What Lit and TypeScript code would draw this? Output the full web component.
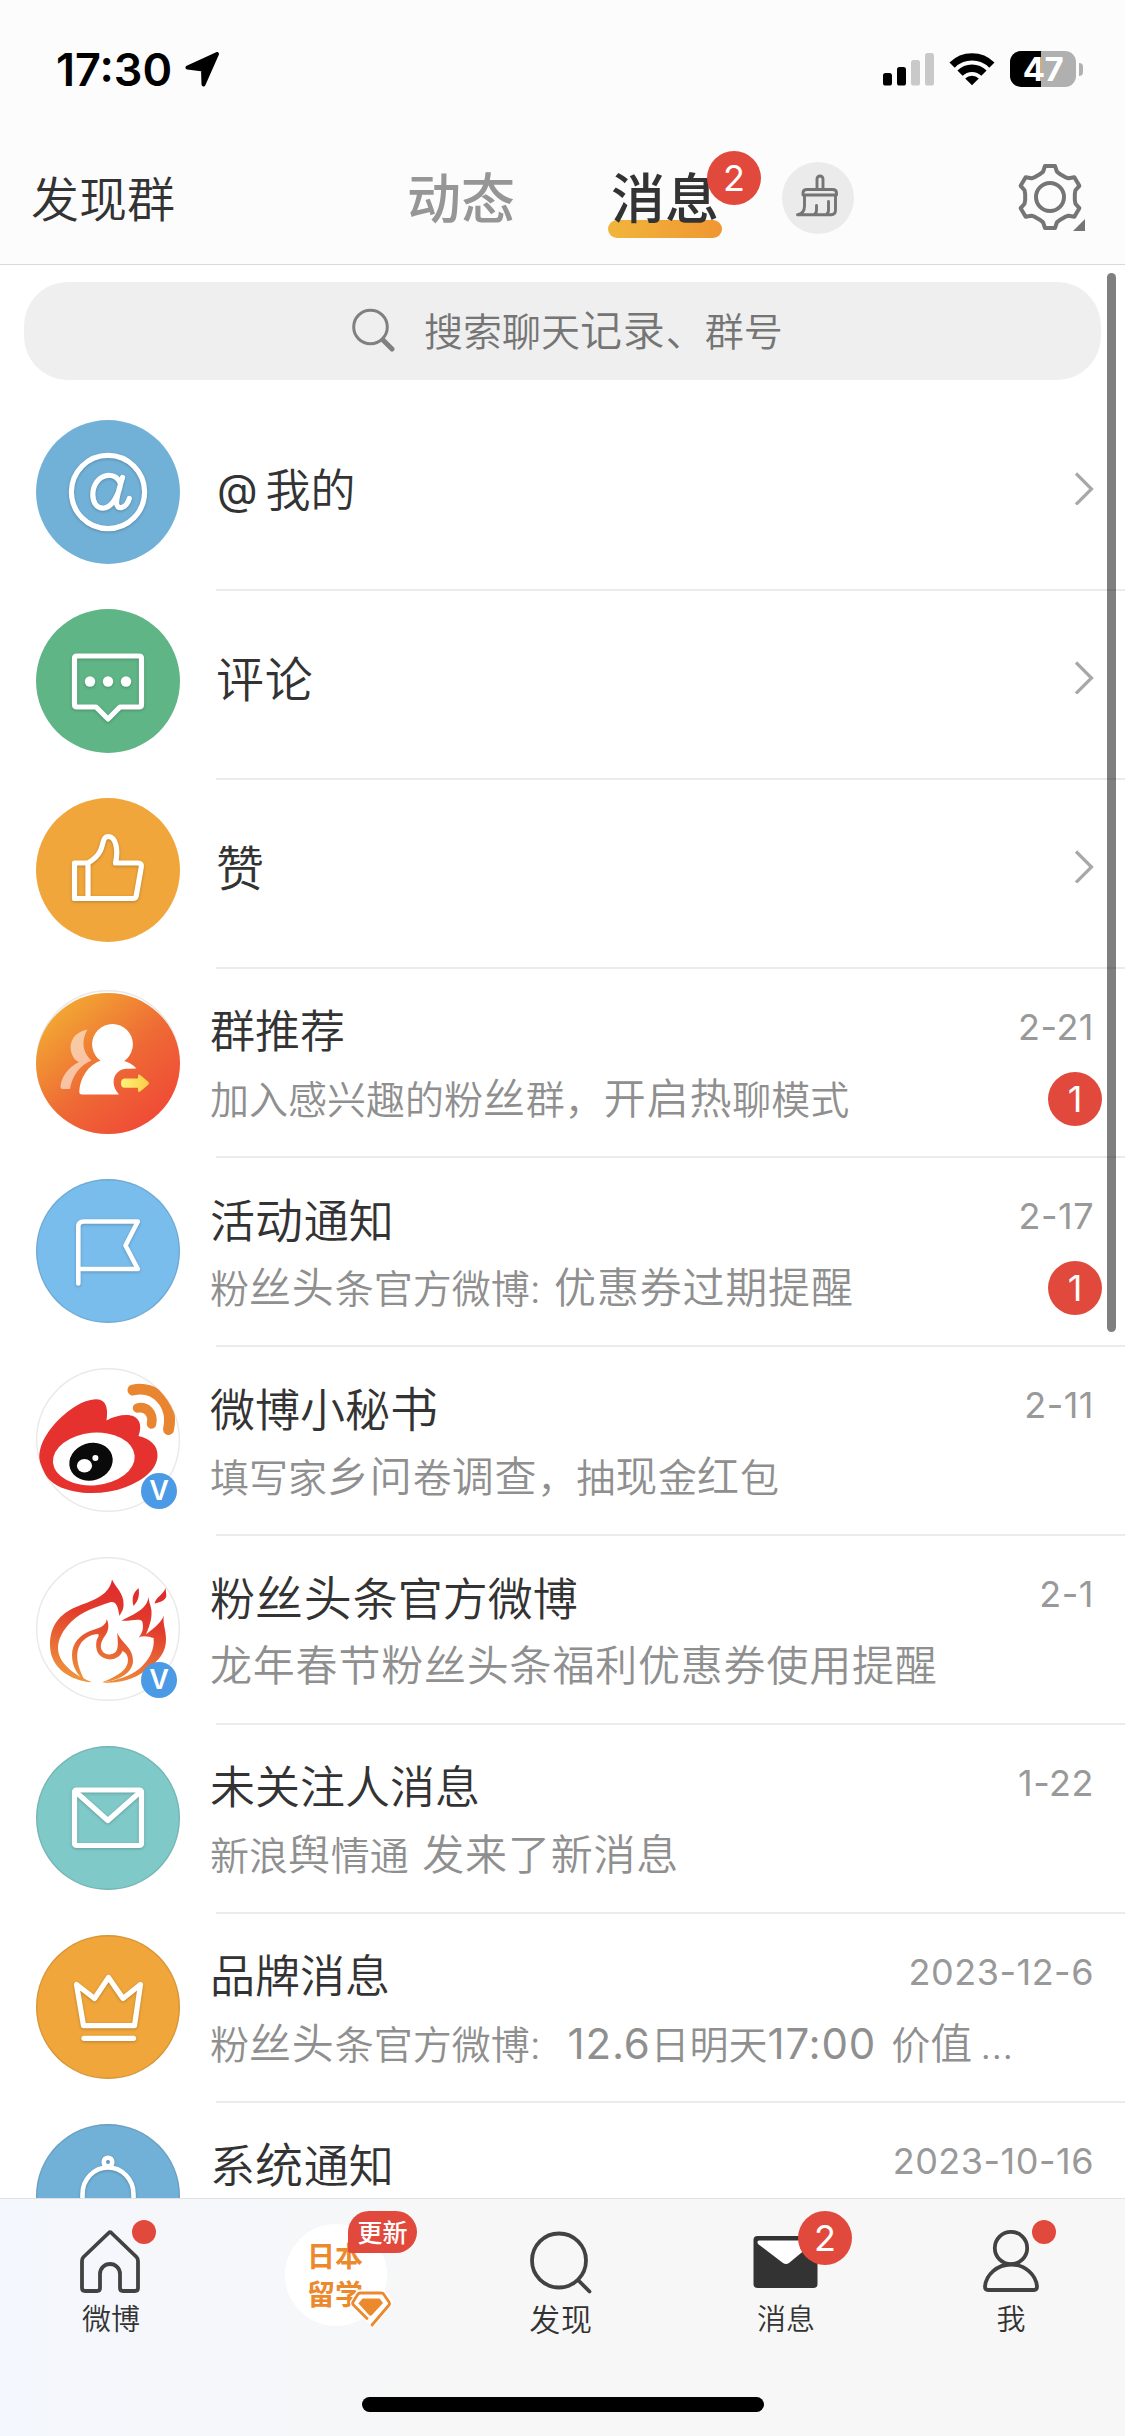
import { LitElement, html, svg, css, nothing, TemplateResult } from "lit";
import { customElement, property } from "lit/decorators.js";

const gearPath = (() => {
  const tooth = [[-9.8, -23], [-6.9, -25.4], [-5, -31], [5, -31], [6.9, -25.4], [9.8, -23]];
  const pts: string[] = [];
  for (let i = 0; i < 6; i++) {
    const a = (i * Math.PI) / 3;
    for (const [x, y] of tooth) {
      pts.push(`${(x * Math.cos(a) - y * Math.sin(a)).toFixed(2)} ${(x * Math.sin(a) + y * Math.cos(a)).toFixed(2)}`);
    }
  }
  return "M" + pts.join("L") + "Z";
})();

/** Text in square brackets is set one step larger than the rest; numbers in them are also a step heavier. */
const sized = (s: string) =>
  s.split(/[\[\]]/).map((part, i) =>
    part ? (i % 2 ? html`<span class="lg ${/^[\d.:]+ ?$/.test(part) ? "num" : ""}">${part}</span>` : html`<span>${part}</span>`) : nothing);

const icons: Record<string, TemplateResult> = {
  at: svg`<circle cx="72" cy="72" r="36.6"/>
    <path d="M86.5 57.500C84 66 81 75 80.500 82.500C80.500 91 90.500 88.500 93.300 78.500M84.500 64C82 57 77 55 72 55.300C63 56 56.800 65 56.800 74.500C56.800 83 61 88.200 67 88.200C74 88 80.500 80 84 67"/>`,
  comment: svg`<path d="M41 47H103Q105.500 47 105.500 49.500V95.500Q105.500 98 103 98H84L72 110L60 98H41Q38.500 98 38.500 95.500V49.500Q38.500 47 41 47Z"/>
    <g class="solid"><circle cx="54" cy="72.500" r="5.200"/><circle cx="72" cy="72.500" r="5.200"/><circle cx="90" cy="72.500" r="5.200"/></g>`,
  like: svg`<path d="M52 65H38.500V100.500H97Q99.500 100.500 100.200 98L105.300 69Q105.800 65 102 65H79.500C82.500 52 80 39 72.500 38.500C66.500 38.500 67.500 46 64.500 52.500C62 58 57 62 52 65V100.500"/>`,
  flag: svg`<path d="M42.300 104.500V48Q42.300 42.500 48 42.500H101.800L89.500 66.500L101.800 90H42.300"/>`,
  mail: svg`<rect x="38.500" y="44" width="67" height="55.500" rx="2"/><path d="M40.500 46.500L71.800 74.500L103.500 46.500"/>`,
  crown: svg`<path d="M40.500 49.500L47.500 90.700H98.500L104.500 49.500L87 63.500L72.500 42.500L58.500 63.500Z"/><path d="M48 103.300H97.500"/>`,
  bell: svg`<circle cx="72" cy="38" r="4.300"/><path d="M38 106H106M46.500 106V70A25.500 26.500 0 0 1 97.500 70V106"/>`,
};

const groupArt = svg`
  <defs><linearGradient id="gg" x1=".15" y1=".1" x2=".85" y2=".9">
    <stop offset="0" stop-color="#f2a833"/><stop offset=".55" stop-color="#ee6935"/><stop offset="1" stop-color="#f04a36"/></linearGradient>
    <linearGradient id="ga" x1="0" x2="1"><stop offset="0" stop-color="#fff27a"/><stop offset="1" stop-color="#f8ce45"/></linearGradient></defs>
  <circle cx="72" cy="72" r="71.300" fill="#fff" stroke="#e8e8e8" stroke-width="1.400"/>
  <ellipse cx="72" cy="73.500" rx="72" ry="70.500" fill="url(#gg)"/>
  <path d="M51.500 39.500C38 42 33 52 35 61C36 67 40 71 43 72C32 77 25 88 24.500 96.500Q24.500 99 27 99H34C36 86 44 75 55.500 70.500C48 64 44 52 51.500 39.500Z" fill="#fff" opacity=".55"/>
  <circle cx="76.500" cy="54.300" r="20.400" fill="#fff"/>
  <path d="M66 70C51 75 44 89 43.300 101Q43 104.500 46 104.500H83C76 97 76 87 82 82Q86 78.500 91 78.700L100.500 78.500C97 74.500 92 72 86.500 70.500Z" fill="#fff"/>
  <path d="M88.500 88.600H102V86Q102 83.500 104.500 85.200L112.500 92Q113.500 93.300 112.500 94.500L104.500 101.300Q102 103 102 100.500V97.800H88.500Q85 97.500 85 93.200Q85 89 88.500 88.600Z" fill="url(#ga)"/>`;

const weiboArt = svg`
  <defs><clipPath id="cc"><circle cx="72" cy="72" r="71.500"/></clipPath></defs>
  <circle cx="72" cy="72" r="71.300" fill="#fff" stroke="#e9e9e9" stroke-width="1.400"/>
  <g clip-path="url(#cc)">
  <path d="M3.300 90C3 72 18 54 34 42C46 33 58 30 64 31.800C71 34 72 43 70.500 52.500C80 47 92 45.500 98 48.500C105 52 105.500 60 102.500 68C115 71 122 78 121.500 88C121 102 106 113 90 119C68 127.500 40 127 22 118C9 111 4 100 3.300 90Z" fill="#e6322e"/>
  <ellipse cx="57.800" cy="91" rx="41" ry="26.300" transform="rotate(-5 57.800 91)" fill="#fff"/>
  <ellipse cx="55" cy="93.700" rx="22" ry="18.600" transform="rotate(-18 55 93.700)" fill="#0a0a0a"/>
  <ellipse cx="48.500" cy="97.800" rx="7.600" ry="6.800" fill="#fff"/><circle cx="59.400" cy="90" r="3" fill="#fff"/>
  <path d="M97 22C119 17 138 36 132.500 61.500" fill="none" stroke="#e98530" stroke-width="11" stroke-linecap="round"/>
  <path d="M101.500 40C110 38 118 45 115.500 56" fill="none" stroke="#e98530" stroke-width="9.500" stroke-linecap="round"/></g>`;

const fireArt = svg`
  <defs><linearGradient id="ff" gradientUnits="userSpaceOnUse" x1="85" y1="25" x2="60" y2="126">
    <stop offset="0" stop-color="#df2a2c"/><stop offset=".35" stop-color="#e23b2c"/><stop offset="1" stop-color="#ee923c"/></linearGradient></defs>
  <circle cx="72" cy="72" r="71.300" fill="#fff" stroke="#e9e9e9" stroke-width="1.400"/>
  <g fill="url(#ff)">
  <path d="M76 22.500C80 31 88 36 87.600 48C87.500 53 85 56 83.500 59C82 51 81 44.500 75 45C60 50 46 54 35 65C27 73 22 82 22 91C22 106 38 118 56 125.300C36 124 14 112 14 88C14 68 24 57 40 50C54 44 73 40 76 22.500Z"/>
  <path d="M70.800 62C74 70 72 75 67.500 81C64 87 64 92 67.500 95.500C71 98.500 77 98 80 94.500C83 90 81.500 84 81.300 75.500C85 86 97 90 97 104C97 116 82 124 66 125.300C82 119 92 113 92 103C92 98 89 95 86.500 94C84 101 76 103.500 71 102C62 100 59 93 60.500 84C61 81 64 79 62 77C56 77 48 81 44.500 87C38 97 42 112 50 125.300C42 119 36 110 36 98C36 86 44 78 54 74C62 71 70 70 70.800 62Z"/>
  <path d="M102.600 31C97 36 95.500 41 97.500 49C103 43 103.500 38 102.600 31ZM129.500 31C127 38 120 40 118.500 46.500C125 45.500 131 42 130.300 38Z"/>
  <path d="M112.500 37C113 50 103 55 85.400 63.700C94 64.500 103 61 106 64C108 69 107 76 102.600 80.500C108 78 113 80 117.600 81C119 92 113 104 103 112C94 119 82 123 66 126C86 126 98 122 109 114C124 103 130 95 130 82C130 73 126.500 67 127.800 58.500C125 66 119 70 110 77.500C113 70 116 63 115.500 54C115 48 112 44 112.500 37Z"/></g>`;

@customElement("row-avatar")
class RowAvatar extends LitElement {
  @property() icon = "at";
  @property() tint = "#72b1d7";
  @property({ type: Boolean }) rim = false;
  @property({ type: Boolean }) verified = false;
  static styles = css`
    :host { display: block; position: relative; width: 144px; height: 144px; flex: none; }
    svg { display: block; overflow: visible; }
    .line { fill: none; stroke: #fff; stroke-width: 5.2; stroke-linejoin: round; stroke-linecap: round; filter: drop-shadow(0 1px 1.500px rgba(0,0,0,.22)); }
    .thin { stroke-width: 4.6; }
    .solid { fill: #fff; stroke: none; }
    .v { position: absolute; left: 105px; top: 105px; width: 36px; height: 36px; border-radius: 50%; background: #4b9ae5;
      color: #fff; font: 600 27px/36px Inter, sans-serif; text-align: center; }
  `;
  render() {
    const art: Record<string, TemplateResult> = { group: groupArt, weibo: weiboArt, fire: fireArt };
    return html`<svg width="144" height="144" viewBox="0 0 144 144">${
      art[this.icon] ??
      svg`<circle cx="72" cy="72" r="72" fill=${this.tint}/>
        ${this.rim ? svg`<circle cx="72" cy="72" r="71.300" fill="none" stroke="#000" stroke-opacity=".1" stroke-width="1.400"/>` : nothing}
        <g class="line ${this.icon === "flag" || this.icon === "bell" ? "thin" : ""}">${icons[this.icon]}</g>`
    }</svg>${this.verified ? html`<span class="v">V</span>` : nothing}`;
  }
}

interface Entry { icon: string; tint?: string; title: string; sub?: string; date?: string; count?: number; verified?: boolean }

const shortcuts: Entry[] = [
  { icon: "at", tint: "#72b1d7", title: "我的" },
  { icon: "comment", tint: "#5fb585", title: "[评论]" },
  { icon: "like", tint: "#f0a63b", title: "[赞]" },
];
const chats: Entry[] = [
  { icon: "group", title: "群推荐", sub: "加入感兴趣的粉[丝]群，[开启热]聊模式", date: "2-21", count: 1 },
  { icon: "flag", tint: "#79bdec", title: "活[动]通知", sub: "粉[丝头]条官方微博: [优惠券过期提醒]", date: "2-17", count: 1 },
  { icon: "weibo", title: "微博小秘[书]", sub: "填写家[乡问]卷[调查]，抽[现]金[红]包", date: "2-11", verified: true },
  { icon: "fire", title: "粉[丝头]条官方微博", sub: "[龙年春节粉丝头条福利优惠券使用提醒]", date: "2-1", verified: true },
  { icon: "mail", tint: "#80c9c9", title: "未关注人消息", sub: "新浪[舆]情通 [发来了新消息]", date: "1-22" },
  { icon: "crown", tint: "#f0a63b", title: "品牌消息", sub: "粉[丝头]条官方微博:  [12.6]日明天[17:00 ]价[值]\u2009…", date: "2023-12-6" },
  { icon: "bell", tint: "#72b1d7", title: "系[统]通知", sub: "", date: "2023-10-16" },
];

@customElement("app-root")
class AppRoot extends LitElement {
  static styles = css`
    :host { display: block; width: 1125px; height: 2436px; font-family: Inter, "Noto Sans CJK SC", sans-serif; font-weight: 350; color: #333; }
    * { box-sizing: border-box; }
    svg { display: block; flex: none; }
    .screen { position: relative; width: 1125px; height: 2436px; display: flex; flex-direction: column; overflow: hidden; background: #fff; }
    .top { height: 265px; flex: none; background: #fcfcfc; border-bottom: 1px solid #d9d9d9; }
    .status { height: 138px; padding: 0 42px 0 56px; display: flex; align-items: center; justify-content: space-between; }
    .clock { display: flex; align-items: center; gap: 13px; font: 600 45px/1 Inter, sans-serif; color: #000; letter-spacing: 0; }
    .sys { display: flex; align-items: center; gap: 15px; }
    .battery { display: flex; align-items: center; gap: 3px; }
    .cell { width: 66px; height: 36px; border-radius: 11px; background: linear-gradient(90deg, #000 47%, #b0b0b0 47%);
      color: #fff; font: 700 33px/37px Inter, sans-serif; text-align: center; letter-spacing: -.5px; }
    .nub { width: 4px; height: 13px; border-radius: 0 4px 4px 0; background: #b0b0b0; }
    .nav { height: 126px; position: relative; top: -3px; display: grid; grid-template-columns: 407px 204px 171px 72px 1fr; align-items: center; }
    .discover { padding: 4px 0 0 31px; font-size: 48px; line-height: 60px; }
    .tab { position: relative; justify-self: start; font-size: 54px; line-height: 60px; font-weight: 500; color: #969696; padding-top: 4px; }
    .tab b { position: relative; font-weight: 500; }
    .on { color: #333; }
    .on::before { content: ""; position: absolute; left: -3px; top: 54px; width: 114px; height: 18px; border-radius: 9px; background: linear-gradient(90deg, #f1b53b, #f09632); }
    .badge { width: 54px; height: 54px; border-radius: 50%; background: #e1493c; color: #fff; font: 400 36px/54px Inter, sans-serif; text-align: center; flex: none; }
    .navbadge { position: absolute; left: 96px; top: -15px; }
    .clean { width: 72px; height: 72px; border-radius: 50%; background: #ebebeb; }
    .gear { justify-self: end; margin-right: 39px; margin-top: -1px; }
    .content { position: relative; flex: 1; min-height: 0; overflow: hidden; }
    .search { margin: 17px 24px 22px; height: 98px; border-radius: 44px; background: #efefef; display: flex; align-items: center; padding: 0 0 2px 328px; gap: 28px; color: #757575; font-size: 39px; --lg: 42px; }
    .search div { margin-top: -6px; }
    .lg { font-size: var(--lg); letter-spacing: .8px; }
    .num { font-weight: 400; }
    .row { height: 189px; padding: 18px 0 0 36px; display: flex; }
    .chat { padding-top: 21px; }
    .main { flex: 1; display: flex; align-items: center; justify-content: space-between; margin: -18px 0 0 36px; padding: 0 31px 17px 0; border-bottom: 2px solid #ebebeb; font-size: 45px; --lg: 48px; }
    .main .at { position: relative; top: -2px; font-weight: 400; margin: 0 8px 0 1px; font-size: 42px; }
    .chat .main { margin-top: -21px; padding: 33px 0 0; display: block; }
    .line { height: 60px; line-height: 60px; display: flex; justify-content: space-between; align-items: center; margin-left: -6px; padding-right: 31px; white-space: pre; }
    .line2 { margin-top: 7px; font-size: 39px; --lg: 42px; color: #8f8f8f; padding-right: 23px; word-spacing: 2.5px; }
    .date { font-size: 36px; font-weight: 400; color: #999; letter-spacing: .5px; position: relative; top: -5px; }
    .bar { position: absolute; left: 1107px; top: 8px; width: 9px; height: 1059px; border-radius: 5px; background: rgba(0,0,0,.5); }
    .tabs { position: relative; height: 238px; flex: none; border-top: 1px solid #e2e2e4; background: linear-gradient(90deg, #f4f7fd 0, rgba(247,247,248,0) 42%), #f7f7f7; display: grid; grid-template-columns: repeat(5, 1fr); }
    .item { position: relative; display: flex; flex-direction: column; align-items: center; padding: 25px 3px 0 0; font-size: 29px; line-height: 36px; gap: 4px; --lg: 31px; }
    .dot { position: absolute; left: 132px; top: 21px; width: 24px; height: 24px; border-radius: 50%; background: #e1493c; }
    .tb { position: absolute; left: 123px; top: 12px; }
    .promo { width: 102px; height: 102px; border-radius: 50%; background: #fff; color: #ed892d; font: 700 28px/38px "Noto Sans CJK SC", sans-serif; padding: 12px 0 0 22px; }
    .promo div { height: 38px; }
    .new { position: absolute; left: 123px; top: 12px; width: 69px; height: 42px; border-radius: 21px 21px 21px 3px; background: #e1493c; color: #fff; font: 500 25px/41px "Noto Sans CJK SC", sans-serif; text-align: center; }
    .gem { position: absolute; left: 124px; top: 90px; }
    .home { position: absolute; left: 362px; top: 198px; width: 402px; height: 15px; border-radius: 8px; background: #000; }
  `;

  private row(e: Entry) {
    return html`<div class="row">
      <row-avatar .icon=${e.icon} .tint=${e.tint ?? ""}></row-avatar>
      <div class="main"><div>${e.icon === "at" ? html`<span class="at">@</span>` : nothing}${sized(e.title)}</div>
        <svg width="20" height="36" viewBox="0 -2 20 36" fill="none" stroke="#a8a8a8" stroke-width="3.200"><path d="M2 2.500L17.500 18L2 33.500"/></svg></div>
    </div>`;
  }

  private chat(e: Entry) {
    return html`<div class="row chat">
      <row-avatar .icon=${e.icon} .tint=${e.tint ?? ""} .rim=${true} .verified=${!!e.verified}></row-avatar>
      <div class="main">
        <div class="line"><div>${sized(e.title)}</div><span class="date">${e.date}</span></div>
        <div class="line line2"><div>${sized(e.sub ?? "")}</div>${e.count ? html`<span class="badge">${e.count}</span>` : nothing}</div>
      </div>
    </div>`;
  }

  render() {
    return html`<div class="screen">
      <header class="top">
        <div class="status">
          <div class="clock"><span>17:30</span>
            <svg width="34" height="35" viewBox="185 53 34 35"><path d="M187.500 68.500L217 55L203.500 85.500L203 70.500Z" stroke="#000" stroke-width="4" stroke-linejoin="round"/></svg></div>
          <div class="sys">
            <svg width="51" height="33" viewBox="0 0 51 33"><rect y="20" width="9" height="12.500" rx="2.600"/><rect x="14" y="14" width="9" height="18.500" rx="2.600"/>
              <g fill="#c9c9c9"><rect x="28" y="7" width="9" height="25.500" rx="2.600"/><rect x="42" width="9" height="32.500" rx="2.600"/></g></svg>
            <svg width="46" height="34" viewBox="-23 -32.500 46 34"><g fill="none" stroke="#000" stroke-width="7.400"><path d="M-19.900 -19.400A28.200 28.200 0 0 1 19.900 -19.400"/><path d="M-12 -11.300A17 17 0 0 1 12 -11.300"/></g>
              <path d="M0 .8L-6.800 -6A9.500 9.500 0 0 1 6.800 -6Z"/></svg>
            <div class="battery"><div class="cell">47</div><div class="nub"></div></div>
          </div>
        </div>
        <nav class="nav">
          <div class="discover">发现群</div>
          <div class="tab">动态</div>
          <div class="tab on"><b>消息</b><span class="badge navbadge">2</span></div>
          <div class="clean"><svg width="72" height="72" viewBox="0 0 72 72" fill="none" stroke="#757575" stroke-width="2.900" stroke-linejoin="round" stroke-linecap="round">
            <path d="M35 27V17A3 3 0 0 1 41 17V27M21 33V31Q21 27.500 25 27.500H50.500Q54.500 27.500 54.500 31V33ZM22.500 33.500V44C22.500 49 20 52 15.500 52.800H49Q53.500 52.500 53.500 48V33.500M34.500 43.500V48Q34.500 51.500 32 52.500M46.500 39.500V48Q46.500 51.500 44 52.500"/></svg></div>
          <svg class="gear" width="69" height="70" viewBox="-33 -34 69 70"><g fill="none" stroke="#757575" stroke-width="4" stroke-linejoin="round"><path d=${gearPath}/><circle r="14"/></g><path d="M35 22V34H23Z" fill="#757575"/></svg>
        </nav>
      </header>
      <main class="content">
        <div class="search"><svg width="44" height="44" viewBox="0 0 44 44" fill="none" stroke="#808080" stroke-linecap="round"><circle cx="18.500" cy="19" r="16.800" stroke-width="3"/><path d="M31 32L40 41" stroke-width="5"/></svg>
          <div>${sized("搜索聊天[记录]、群号")}</div></div>
        ${shortcuts.map((e) => this.row(e))}
        ${chats.map((e) => this.chat(e))}
        <div class="bar"></div>
      </main>
      <footer class="tabs">
        <div class="item"><svg width="66" height="74" viewBox="79 2224 66 74" fill="none" stroke="#424242" stroke-width="3.800" stroke-linejoin="round"><path d="M112 2232.500Q110.800 2231.800 109.600 2233L84.500 2257Q83 2258.500 83 2261V2288Q83 2291 86 2291H98Q101 2291 101 2288V2274A10 10 0 0 1 121 2274V2288Q121 2291 124 2291H136Q139 2291 139 2288V2261Q139 2258.500 137.500 2257L112 2232.500Z"/></svg>
          <span>微博</span><i class="dot"></i></div>
        <div class="item"><div class="promo"><div>日本</div><div>留学</div></div><span class="new">更新</span>
          <svg class="gem" width="44" height="40" viewBox="0 0 44 40" stroke-linejoin="round"><path d="M10 3.500H34L41 13.500L24 34L20 30L4 13.500Z" fill="#fff" stroke="#fff" stroke-width="6"/><path d="M23 36L40 16Q41 14.500 40 13L34.500 5Q34 4 32 4H11.500Q10 4 9 5L4 13Q3 14.500 4.500 16L18 29.500" fill="none" stroke="#ed892d" stroke-width="2.800" stroke-linecap="round"/><path d="M13.500 9.500H30.500L34 14L23 26Q21.500 27.500 20 26L9.500 14.500Z" fill="#ed892d"/></svg></div>
        <div class="item"><svg width="66" height="74" viewBox="529 2224 66 74" fill="none" stroke="#424242" stroke-width="3.800" stroke-linecap="round"><circle cx="560" cy="2260.500" r="27"/><path d="M580 2281L590.500 2291.500"/></svg><span class="lg">发现</span></div>
        <div class="item"><svg width="66" height="74" viewBox="754 2224 66 74"><rect x="754.500" y="2236" width="64" height="52" rx="4" fill="#333"/><path d="M760 2240.500H813.500Q815 2242 813.500 2243.500L790 2263Q787 2265 784 2263L759 2244Q757.500 2241 760 2240.500Z" fill="#fff"/></svg>
          <span>消息</span><span class="badge tb">2</span></div>
        <div class="item"><svg width="66" height="74" viewBox="978 2224 66 74" fill="none" stroke="#424242" stroke-width="3.800" stroke-linejoin="round"><circle cx="1011" cy="2248" r="16.200"/><path d="M1011 2264.500C997 2264.500 986 2275 985 2286.500Q985 2290 988 2290H1034Q1037 2290 1037 2286.500C1036 2275 1025 2264.500 1011 2264.500Z"/></svg>
          <span>我</span><i class="dot"></i></div>
        <div class="home"></div>
      </footer>
    </div>`;
  }
}
